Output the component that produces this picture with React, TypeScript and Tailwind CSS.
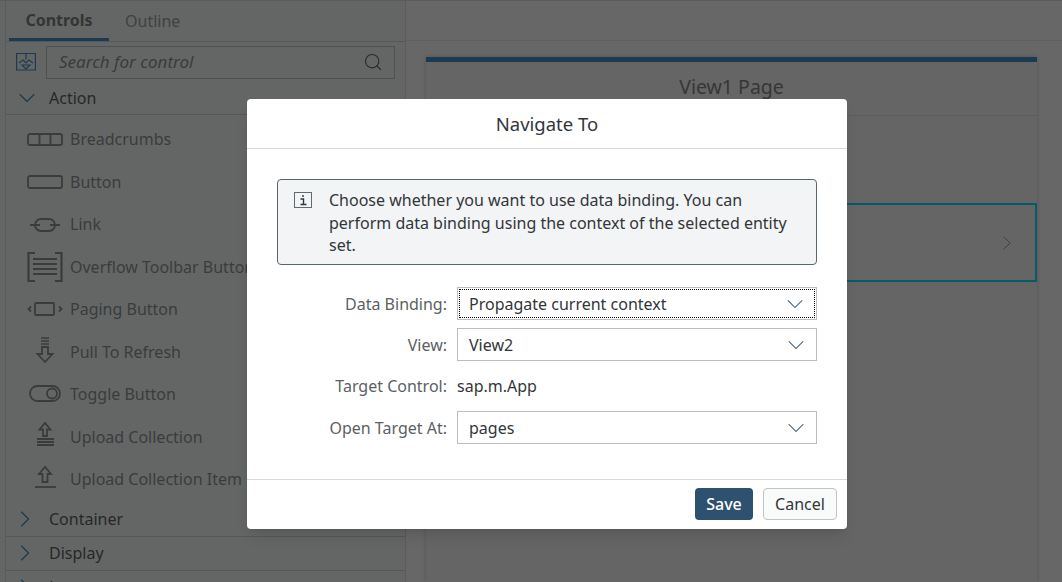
import { ChevronDown, ChevronRight, Search } from 'lucide-react';

const font = "font-['Noto_Sans',sans-serif]";

function Stroke({ children, w = 36, h = 24 }: { children: React.ReactNode; w?: number; h?: number }) {
  return (
    <svg width={w} height={h} viewBox="0 0 36 24" fill="none" stroke="#3a3c3c" strokeWidth="1.8" className="shrink-0 overflow-visible">
      {children}
    </svg>
  );
}

const controls: { label: string; icon: React.ReactNode }[] = [
  {
    label: 'Breadcrumbs',
    icon: (
      <Stroke>
        <rect x="1" y="7" width="34" height="11" rx="2" />
        <path d="M12.500 7v11M23.500 7v11" />
      </Stroke>
    ),
  },
  {
    label: 'Button',
    icon: (
      <Stroke>
        <rect x="1" y="6" width="34" height="12" rx="2" />
      </Stroke>
    ),
  },
  {
    label: 'Link',
    icon: (
      <Stroke>
        <rect x="8" y="7" width="20" height="12" rx="6" />
        <path d="M3 13h10M23 13h10" />
      </Stroke>
    ),
  },
  {
    label: 'Overflow Toolbar Button',
    icon: (
      <Stroke>
        <path d="M8 -2H1.500v28H8M28 -2h6.500v28H28" strokeWidth="2.200" />
        <path d="M6 4h24M6 9h24M6 14h24M6 19h24" />
      </Stroke>
    ),
  },
  {
    label: 'Paging Button',
    icon: (
      <Stroke>
        <rect x="8" y="6" width="19" height="12" rx="1" />
        <path d="M4 9.500 1.500 12 4 14.500M32 9.500 34.500 12 32 14.500" />
      </Stroke>
    ),
  },
  {
    label: 'Pull To Refresh',
    icon: (
      <Stroke>
        <path d="M14 -2h8M14 1h8M14 4h8" strokeWidth="1.300" />
        <path d="M15 7h6v7h4.500L18 22l-7.500-8H15z" />
      </Stroke>
    ),
  },
  {
    label: 'Toggle Button',
    icon: (
      <Stroke>
        <rect x="3" y="4" width="30" height="15" rx="7.500" />
        <circle cx="25" cy="11.500" r="5" />
      </Stroke>
    ),
  },
  {
    label: 'Upload Collection',
    icon: (
      <Stroke>
        <path d="M16 11V4.500h-3.500L18 -2l5.500 6.500H20V11z" />
        <path d="M10 14h17M10 17h17M10 20h17" />
      </Stroke>
    ),
  },
  {
    label: 'Upload Collection Item',
    icon: (
      <Stroke>
        <path d="M15.500 15V7H12l6-7 6 7h-3.500v8z" />
        <path d="M8 20h21" />
      </Stroke>
    ),
  },
];

function SectionHeader({ label, open }: { label: string; open?: boolean }) {
  return (
    <div className="flex h-[34px] shrink-0 items-center border-b border-[#565858] pl-[14px] text-[16px] text-[#262828]">
      {open ? (
        <ChevronDown size={28} strokeWidth={1} className="mr-[8px] ml-[-7px] shrink-0 text-[#1c3a52]" />
      ) : (
        <ChevronRight size={28} strokeWidth={1} className="mr-[10px] ml-[-9px] shrink-0 text-[#1c3a52]" />
      )}
      {label}
    </div>
  );
}

function Sidebar() {
  return (
    <div className="ml-[5px] flex h-full w-[401px] shrink-0 flex-col overflow-hidden border-r border-l border-[#5a5c5c] bg-[#646666]">
      <div className="flex h-[41px] shrink-0 items-end border-b border-[#565858] pl-[3px] text-[16px]">
        <div className="flex h-[40px] w-[100px] items-center justify-center border-b-[3px] border-[#1c3a52] font-bold text-[#333535]">
          Controls
        </div>
        <div className="flex h-[40px] items-center pl-[16px] text-[#3f4141]">Outline</div>
      </div>
      <div className="flex h-[39px] shrink-0 items-center pt-[1px] pr-[10px]">
        <svg width="20" height="20" viewBox="0 0 20 20" fill="none" stroke="#1c3a52" strokeWidth="1.200" className="ml-[10px] shrink-0">
          <path d="M.6 1.500h18.800v16.500H.6zM10 1.500v6" />
          <path d="M3 11l4-3 3 3 3-3 4 3M6 13h8l-4 4z" />
        </svg>
        <div className="ml-[10px] flex h-[33px] flex-1 items-center justify-between border border-[#4f5151] pr-[11px] pl-[12px] text-[17px] text-[#3a3c3c] italic">
          Search for control
          <Search size={20} strokeWidth={1.4} className="text-[#2b2d2d]" />
        </div>
      </div>
      <SectionHeader label="Action" open />
      <div className="flex shrink-0 flex-col pt-[3px] pb-[2px]">
        {controls.map((c) => (
          <div key={c.label} className="flex h-[42.500px] items-center gap-[7px] pl-[21px] text-[16px] whitespace-nowrap text-[#3a3c3c]">
            {c.icon}
            {c.label}
          </div>
        ))}
      </div>
      <SectionHeader label="Container" />
      <SectionHeader label="Display" />
      <SectionHeader label="Layout" />
    </div>
  );
}

function Canvas() {
  return (
    <div className="flex h-full flex-1 flex-col bg-[#676767]">
      <div className="h-[40px] shrink-0 border-b border-[#5f6161]" />
      <div className="flex-1 pt-[16px] pr-[25px] pl-[20px]">
        <div className="h-full border-t-[5px] border-[#1c3a52] bg-[#656565] shadow-[0_0_4px_rgba(0,0,0,0.2)]">
          <div className="flex h-[54px] items-center justify-center border-b border-[#5c5e5e] pb-[4px] text-[19.500px] text-[#353737]">
            View1 Page
          </div>
          <div className="mt-[87px] flex h-[79px] items-center justify-end border-2 border-[#075a68] pr-[16px]">
            <ChevronRight size={24} strokeWidth={1} className="text-[#3f4141]" />
          </div>
        </div>
      </div>
    </div>
  );
}

function SelectBox({ value, focused }: { value: string; focused?: boolean }) {
  return (
    <div className="flex h-[33px] w-[360px] items-center justify-between border border-[#bdbdbd] bg-white p-[1px] text-[#32363a]">
      <div className={`flex h-full w-full items-center justify-between pr-[5px] ${focused ? 'border border-dotted border-black pl-[9px]' : 'pl-[10px]'}`}>
        {value}
        <ChevronDown size={28} strokeWidth={0.9} className="text-[#2c4e6c]" />
      </div>
    </div>
  );
}

function FormRow({ label, children }: { label: string; children: React.ReactNode }) {
  return (
    <div className="flex items-center gap-[10px]">
      <div className="w-[170px] text-right text-[#5c5f62]">{label}</div>
      {children}
    </div>
  );
}

function Dialog() {
  return (
    <div className="absolute top-[98px] left-[247px] flex h-[430px] w-[600px] flex-col rounded-[4px] bg-white text-[16px] text-[#32363a] shadow-lg">
      <div className="flex h-[50px] shrink-0 items-center justify-center border-b border-[#d9d9d9] pt-[1px] text-[18.500px]">Navigate To</div>
      <div className="flex-1 px-[30px] pt-[30px]">
        <div className="flex h-[86px] rounded-[4px] border border-[#55666f] bg-[#f2f4f5] pt-[9px] pl-[16px]">
          <svg width="18" height="18" viewBox="0 0 18 18" fill="none" className="mt-[3px] shrink-0">
            <rect x=".5" y=".5" width="17" height="15" stroke="#5c6b75" />
            <path d="M9 3v2M6.500 7H9.500v5M6.500 12.500h6" stroke="#32363a" strokeWidth="1.400" />
          </svg>
          <p className="ml-[17px] w-[470px] text-[16px] leading-[22.500px]">
            Choose whether you want to use data binding. You can perform data binding using the context of the selected entity set.
          </p>
        </div>
        <div className="mt-[22px] flex flex-col">
          <FormRow label="Data Binding:">
            <SelectBox value="Propagate current context" focused />
          </FormRow>
          <div className="mt-[8px]">
            <FormRow label="View:">
              <SelectBox value="View2" />
            </FormRow>
          </div>
          <div className="mt-[7px] mb-[7px] flex h-[36px] items-center">
            <FormRow label="Target Control:">
              <span>sap.m.App</span>
            </FormRow>
          </div>
          <FormRow label="Open Target At:">
            <SelectBox value="pages" />
          </FormRow>
        </div>
      </div>
      <div className="flex h-[50px] shrink-0 items-center justify-end gap-[10px] border-t border-[#d9d9d9] pr-[10px] pb-[2px]">
        <button className="h-[32px] w-[58px] rounded-[4px] bg-[#2f5170] font-medium text-white">Save</button>
        <button className="h-[32px] w-[74px] rounded-[4px] border border-[#c4c4c4] bg-[#f9fafa] text-[#32363a]">Cancel</button>
      </div>
    </div>
  );
}

export default function App() {
  return (
    <div className={`relative flex h-[582px] w-[1062px] overflow-hidden border-t border-[#5a5c5c] bg-[#646666] ${font}`}>
      <Sidebar />
      <Canvas />
      <Dialog />
    </div>
  );
}
